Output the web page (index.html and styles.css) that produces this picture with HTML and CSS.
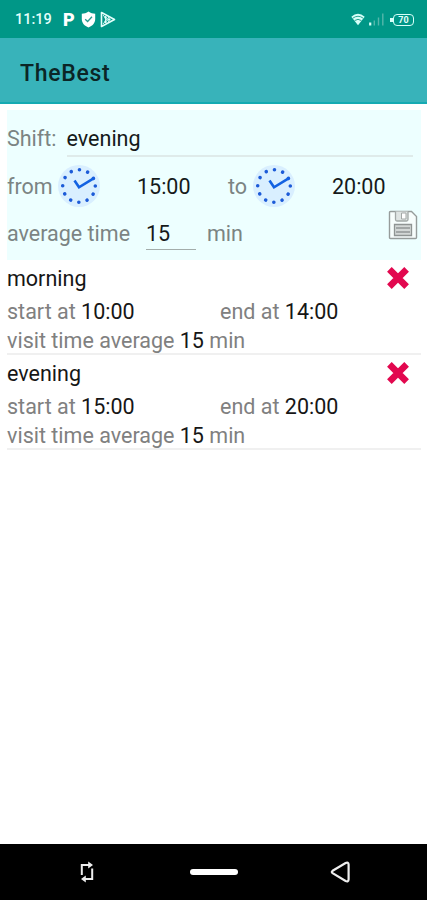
FILE: index.html
```html
<!DOCTYPE html>
<html lang="en">

<head>
    <meta charset="UTF-8">
    <title>TheBest</title>
    <link rel="stylesheet" href="styles.css">
</head>

<body>
    <svg class="defs" width="0" height="0">
        <symbol id="clock" viewBox="0 0 44 44">
            <circle cx="22" cy="22" r="21" fill="#d9efff" />
            <circle cx="22" cy="22" r="16.3" fill="none" stroke="#1c5bd8" stroke-width="3.6" stroke-linecap="round" stroke-dasharray="0.01 8.5247" />
            <path d="M17.5 16.5L22 23.3L37 14.2" fill="none" stroke="#1262e2" stroke-width="2.6" />
        </symbol>
        <symbol id="cross" viewBox="0 0 22 22">
            <path d="M3.1 3.1L18.9 18.9M18.9 3.1L3.1 18.9" stroke="#e2084f" stroke-width="6" />
        </symbol>
    </svg>

    <div class="status">
        <span class="time">11:19</span>
        <b class="parking">P</b>
        <svg class="shield" width="15" height="17" viewBox="0 0 15 17">
            <path d="M7.5 .5C5.5 2 3 2.6 .8 2.8V8C.8 12 3.5 15 7.5 16.5C11.5 15 14.2 12 14.2 8V2.8C12 2.6 9.5 2 7.5 .5Z" fill="#fff" />
            <path d="M4.2 8.2L6.6 10.5L11 5.8" fill="none" stroke="#279c91" stroke-width="1.3" />
        </svg>
        <svg class="play" width="16" height="17" viewBox="0 0 16 17">
            <path d="M1.5 1.5L14.5 8.5L1.5 15.5Z" fill="none" stroke="#e4fffb" stroke-width="1.6" stroke-linejoin="round" />
            <path d="M3 4L9 11M3 13L9 6M5.5 5V12" stroke="#e4fffb" stroke-width=".9" />
            <circle cx="5.6" cy="6.5" r="1.2" fill="#e4fffb" />
            <circle cx="5.6" cy="10.7" r="1.2" fill="#e4fffb" />
            <circle cx="9.2" cy="8.5" r="1.3" fill="#e4fffb" />
        </svg>
        <svg class="wifi" width="14" height="13" viewBox="0 0 14 13">
            <path d="M.3 3.7Q7-2.1 13.7 3.7L7 12.3Z" fill="#d6fff9" />
            <path d="M1.8 5.2Q7 1.3 12.2 5.2M3.6 7.6Q7 5 10.4 7.6" fill="none" stroke="#169887" stroke-width=".9" />
        </svg>
        <svg class="signal" width="15" height="13" viewBox="0 0 15 13">
            <path d="M1.2 9.5V12.5" stroke="#d6fff9" stroke-width="2.2" />
            <path d="M5.3 7.5V12.5M9.5 4.5V12.5M13.8 .5V12.5" stroke="#55b7ab" stroke-width="1.4" />
        </svg>
        <span class="battery">70</span>
    </div>
    <header>TheBest</header>

    <main>
        <form>
            <div class="row">
                <label>Shift:</label>
                <span class="shift">evening</span>
            </div>
            <div class="row">
                <label class="from">from</label>
                <svg class="clock"><use href="#clock" /></svg>
                <span class="hour">15:00</span>
                <label class="to">to</label>
                <svg class="clock"><use href="#clock" /></svg>
                <span class="hour">20:00</span>
            </div>
            <div class="row">
                <label class="average">average time</label>
                <span class="minutes">15</span>
                <label>min</label>
                <svg class="save" width="30" height="30" viewBox="0 0 30 30">
                    <path d="M1.5 2.5Q1.5 1.5 2.5 1.5H23.5L28.5 6.5V27.5Q28.5 28.5 27.5 28.5H2.5Q1.5 28.5 1.5 27.5Z" fill="#f7fdfc" stroke="#969c9b" stroke-width="1.4" />
                    <path d="M7.5 1.5V9.5Q7.5 11 9 11H18.5Q20 11 20 9.5V1.5" fill="#dfe4e3" stroke="#a3a8a7" stroke-width="1.3" />
                    <path d="M13.5 3H18V9H13.5Z" fill="#fff" stroke="#a3a8a7" />
                    <path d="M6.5 14.5H23.5V25.5H6.5Z" fill="#d3d7d6" stroke="#8f9493" stroke-width="1.3" />
                    <path d="M8 18H22M8 22H22" stroke="#929796" stroke-width="1.5" />
                </svg>
            </div>
        </form>

        <article>
            <div class="name">morning <svg class="cross"><use href="#cross" /></svg></div>
            <div class="hours">
                <p>start at <b>10:00</b></p>
                <p>end at <b>14:00</b></p>
            </div>
            <p class="visit">visit time average <b>15</b> min</p>
        </article>
        <article>
            <div class="name">evening <svg class="cross"><use href="#cross" /></svg></div>
            <div class="hours">
                <p>start at <b>15:00</b></p>
                <p>end at <b>20:00</b></p>
            </div>
            <p class="visit">visit time average <b>15</b> min</p>
        </article>
    </main>

    <nav>
        <svg width="14" height="22" viewBox="0 0 14 22">
            <path d="M1.8 14V4H9M12.2 7.5V18H5" fill="none" stroke="#eee" stroke-width="2" />
            <path d="M8.2 .5L13 4L8.2 7.5ZM5.8 14.5L1 18L5.8 21.5Z" fill="#eee" />
        </svg>
        <span class="home"></span>
        <svg width="21" height="22" viewBox="0 0 21 22">
            <path d="M2.6 9.8L15.6 2Q18.4 .8 18.6 3.5V18.5Q18.4 21.2 15.6 20L2.6 12.2Q1 11 2.6 9.8Z" fill="none" stroke="#eee" stroke-width="2.2" />
        </svg>
    </nav>
</body>

</html>
```

FILE: styles.css
```css
* {
    box-sizing: border-box;
}

body {
    margin: 0;
    height: 900px;
    display: flex;
    flex-direction: column;
    overflow: hidden;
    background-color: #fff;
    font-family: Roboto, "Liberation Sans", sans-serif;
    font-size: 21.5px;
    color: #151a1a;
}

p {
    margin: 0;
}

svg {
    flex: none;
}

.defs {
    position: absolute;
}

.status {
    height: 38px;
    display: flex;
    align-items: center;
    padding: 1px 13px 0 15px;
    background-color: #009787;
    color: #e4fffb;
}

.time {
    width: 48px;
    font-size: 14.5px;
    font-weight: 500;
}

.parking {
    width: 18px;
    font-size: 18px;
    font-weight: 900;
    color: #fff;
}

.play {
    margin-left: 4px;
}

.wifi {
    margin-left: auto;
}

.signal {
    margin: 0 9px 0 4px;
}

.battery {
    position: relative;
    width: 21px;
    height: 12px;
    border: 1.5px solid #d6fff9;
    border-radius: 4px;
    font-size: 9px;
    font-weight: 700;
    line-height: 10px;
    text-align: center;
}

.battery::before {
    content: "";
    position: absolute;
    left: -4px;
    top: 3px;
    width: 3px;
    height: 4px;
    background-color: #d6fff9;
}

header {
    height: 66px;
    padding-left: 20px;
    border-bottom: 2px solid #16aab2;
    background-color: #38b3ba;
    font-size: 23px;
    font-weight: 500;
    line-height: 71px;
    letter-spacing: 0.7px;
    color: #0b2526;
}

main {
    flex: 1;
    padding: 6px 6px 0 7px;
}

form {
    height: 150px;
    padding-top: 5px;
    background-color: #edffff;
}

label {
    color: #7b8483;
}

.row {
    height: 47.5px;
    display: flex;
    align-items: center;
}

.shift {
    flex: 1;
    height: 36px;
    margin: 0 8px 0 10px;
    border-bottom: 2px solid #dfebea;
    line-height: 36px;
}

.from {
    width: 50px;
}

.clock {
    width: 44px;
    height: 44px;
}

.hour {
    width: 126px;
    padding-left: 36px;
}

.hour:last-child {
    width: auto;
}

.to {
    width: 25px;
    padding-left: 1px;
}

.average {
    width: 139px;
}

.minutes {
    width: 50px;
    height: 34px;
    margin: -2px 11px 0 0;
    border-bottom: 1px solid #a3adab;
    line-height: 35px;
}

.save {
    margin: -17px 3px 0 auto;
}

article {
    height: 95px;
    border-bottom: 2px solid #f0f0f0;
    color: #808080;
}

article b {
    font-weight: 400;
    color: #161616;
}

.name {
    height: 37px;
    display: flex;
    align-items: center;
    justify-content: space-between;
    color: #161616;
}

.cross {
    width: 24px;
    height: 24px;
    margin: 0 11px 2px 0;
}

.hours {
    display: grid;
    grid-template-columns: 213px 1fr;
    line-height: 29px;
}

.visit {
    line-height: 29px;
}

nav {
    height: 56px;
    display: flex;
    align-items: center;
    justify-content: space-between;
    padding: 0 76px 0 80px;
    background-color: #000;
}

.home {
    width: 48px;
    height: 6px;
    margin-left: 4px;
    border-radius: 3px;
    background-color: #fff;
}
```
